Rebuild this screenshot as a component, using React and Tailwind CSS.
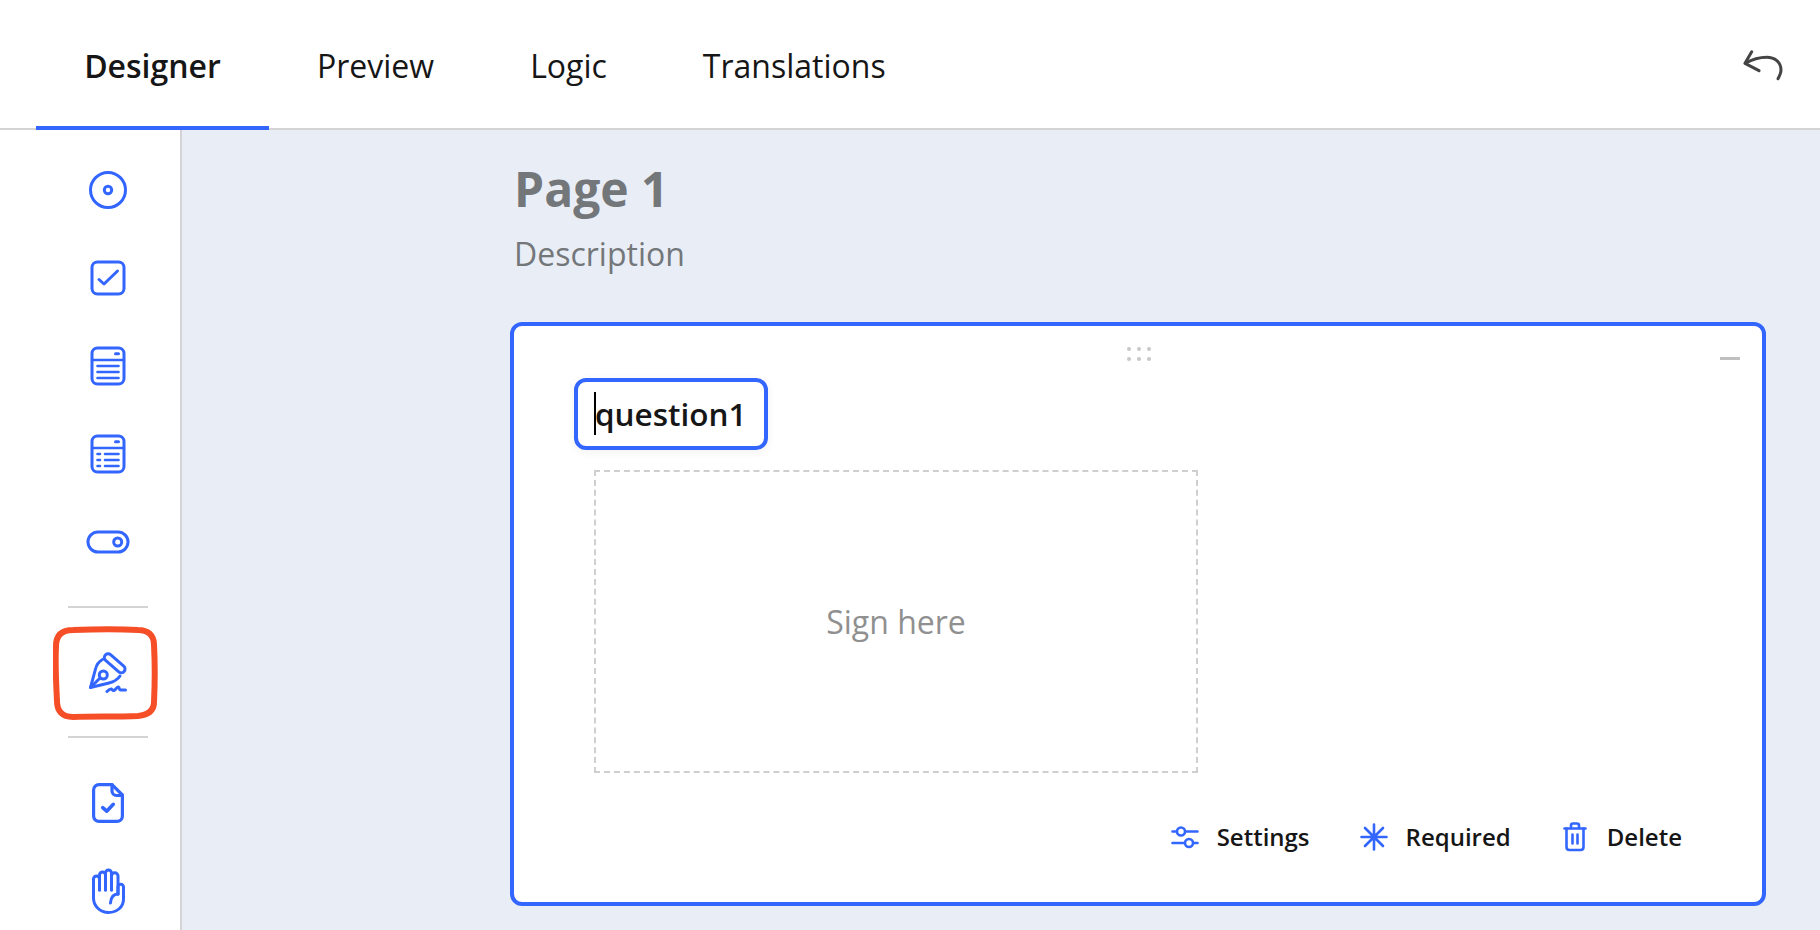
const BLUE = "#3366ff";

function Cell({ children }) {
  return <div className="h-[88px] shrink-0 flex items-center justify-center">{children}</div>;
}

function Radio() {
  return (
    <svg width="40" height="40" viewBox="0 0 40 40" fill="none" stroke={BLUE} strokeWidth="3">
      <circle cx="20" cy="20" r="17.5" />
      <circle cx="20" cy="20" r="3.7" />
    </svg>
  );
}
function Check() {
  return (
    <svg width="36" height="36" viewBox="0 0 36 36" fill="none" stroke={BLUE} strokeWidth="3" strokeLinecap="round" strokeLinejoin="round">
      <rect x="2" y="2" width="32" height="32" rx="5.5" />
      <path d="M9 19.5l5 4.5L27.5 11" />
    </svg>
  );
}
function TableA() {
  return (
    <svg width="36" height="40" viewBox="0 0 36 40" fill="none" stroke={BLUE} strokeWidth="3" strokeLinecap="round">
      <rect x="2" y="2" width="32" height="36" rx="5.5" />
      <path d="M2 14h32" strokeWidth="2.4" />
      <path d="M25.5 7.8h3" />
      <path d="M7.5 20h21M7.5 26h21M7.5 32h21" strokeWidth="2.6" />
    </svg>
  );
}
function TableB() {
  return (
    <svg width="36" height="40" viewBox="0 0 36 40" fill="none" stroke={BLUE} strokeWidth="3" strokeLinecap="round">
      <rect x="2" y="2" width="32" height="36" rx="5.5" />
      <path d="M2 14h32" strokeWidth="2.4" />
      <path d="M25.5 7.8h3" />
      <path d="M7.5 20h2.5M7.5 26h2.5M7.5 32h2.5" strokeWidth="2.6" />
      <path d="M15 20h13.5M15 26h13.5M15 32h13.5" strokeWidth="2.6" />
    </svg>
  );
}
function Toggle() {
  return (
    <svg width="44" height="24" viewBox="0 0 44 24" fill="none" stroke={BLUE} strokeWidth="3">
      <rect x="2" y="2" width="40" height="20" rx="10" />
      <circle cx="31.7" cy="12" r="4" />
    </svg>
  );
}
function Pen() {
  return (
    <svg width="42" height="42" viewBox="0 0 42 42" fill="none" stroke={BLUE} strokeWidth="3" strokeLinecap="round" strokeLinejoin="round">
      <path d="M15.500 8.500C11 11 9.500 14 8.500 18L3.500 36.500 22 32c4-1 8-2.500 11-7" />
      <rect x="15" y="8.500" width="25" height="7.500" rx="3.750" transform="rotate(41 27.5 12.5)" />
      <circle cx="16.300" cy="24" r="4" />
      <path d="M3.500 36.500l9.800-9.800" />
      <path d="M20 40.500c2-2 3-3 4.500-2.500 1 .5 1 2 2.500 1.500 2-.8 3-4 4.500-3.500 1 .5.500 3 2 3h5" />
    </svg>
  );
}
function FileCheck() {
  return (
    <svg width="32" height="40" viewBox="0 0 32 40" fill="none" stroke={BLUE} strokeWidth="3.2" strokeLinecap="round" strokeLinejoin="round">
      <path d="M20 1.600H7A5.400 5.400 0 0 0 1.600 7v26A5.400 5.400 0 0 0 7 38.400h18a5.400 5.400 0 0 0 5.400-5.400V12L20 1.600z" />
      <path d="M20 1.600V8a4.500 4.500 0 0 0 4.500 4.500h5.900" />
      <path d="M10.700 24.700l4 3.500 6.600-6.900" strokeWidth="3.600" />
    </svg>
  );
}
function Hand() {
  return (
    <svg width="35" height="47" viewBox="0 0 35 47" fill="none" stroke={BLUE} strokeWidth="3" strokeLinecap="round" strokeLinejoin="round">
      <path d="M2.500 27V11a3 3 0 0 1 6 0v11" />
      <path d="M8.500 22V7a3 3 0 0 1 6 0v15" />
      <path d="M14.500 22V5a3 3 0 0 1 6 0v17" />
      <path d="M20.500 22V8a3.250 3.250 0 0 1 6.500 0v18" />
      <path d="M27 26v-7a2.750 2.750 0 0 1 5.500 0v12c0 8-6.500 13.500-15 13.500S2.500 38 2.500 30v-3" />
      <path d="M27 26c-4 0-7 3-7.500 9" />
    </svg>
  );
}
function Sliders() {
  return (
    <svg width="28" height="26" viewBox="0 0 28 26" fill="none" stroke={BLUE} strokeWidth="2.6" strokeLinecap="round">
      <path d="M1.500 7.500h3M15.500 7.500h11" />
      <circle cx="10" cy="7.500" r="4" />
      <path d="M1.500 19h11M23.500 19h3" />
      <circle cx="18" cy="19" r="4" />
    </svg>
  );
}
function Star() {
  return (
    <svg width="28" height="28" viewBox="0 0 28 28" fill="none" stroke={BLUE} strokeWidth="2.6" strokeLinecap="round">
      <path d="M14 1.500v25M1.500 14h25M5 5l18 18M23 5L5 23" />
    </svg>
  );
}
function Trash() {
  return (
    <svg width="24" height="30" viewBox="0 0 24 30" fill="none" stroke={BLUE} strokeWidth="2.6" strokeLinecap="round" strokeLinejoin="round">
      <path d="M1.500 6.500h21" />
      <path d="M8 6V3.500C8 2.400 8.800 1.500 10 1.500h4c1.200 0 2 .9 2 2V6" />
      <path d="M3.500 6.500V25c0 1.800 1.200 3 3 3h11c1.800 0 3-1.200 3-3V6.500" />
      <path d="M9.500 12.500v9M14.500 12.500v9" />
    </svg>
  );
}
function Undo() {
  return (
    <svg width="40" height="31" viewBox="0 0 40 31" fill="none" stroke="#444444" strokeWidth="3" strokeLinecap="round" strokeLinejoin="round">
      <path d="M8.700 1.700L2 13.300l14 7.400" />
      <path d="M2.500 13.300C9 9.500 16 7.300 23.700 7.300c8 0 14.300 4.700 14.300 12.700 0 3-1.500 6-3 8.700" />
    </svg>
  );
}

function Action({ icon, label, className }) {
  return (
    <div className={"flex items-center " + className}>
      {icon}
      <span className="text-[24px] leading-[32px] font-semibold text-[#161616]">{label}</span>
    </div>
  );
}

export default function App() {
  return (
    <div className="h-[930px] w-[1820px] overflow-hidden bg-white flex flex-col font-['Open_Sans',sans-serif]">
      <header className="h-[130px] shrink-0 flex items-stretch pl-[36px] border-b-2 border-[#d4d4d4]">
        <div className="w-[233px] h-[130px] pt-[5px] border-b-4 border-[#3366ff] flex items-center justify-center text-[32px] font-semibold text-[#161616]">Designer</div>
        <div className="ml-[48px] pt-[3px] flex items-center text-[32px] text-[#161616]">Preview</div>
        <div className="ml-[96px] pt-[3px] flex items-center text-[32px] text-[#161616]">Logic</div>
        <div className="ml-[96px] pt-[3px] flex items-center text-[32px] text-[#161616]">Translations</div>
        <div className="ml-auto pr-[37px] pt-[50px]"><Undo /></div>
      </header>
      <div className="flex flex-1 min-h-0">
        <aside className="relative w-[182px] shrink-0 border-r-2 border-[#d4d4d4] pt-[16px] pl-[36px] flex flex-col">
          <Cell><Radio /></Cell>
          <Cell><Check /></Cell>
          <Cell><TableA /></Cell>
          <Cell><TableB /></Cell>
          <Cell><Toggle /></Cell>
          <div className="mt-[20px] mx-[32px] h-[2px] bg-[#d4d4d4] shrink-0" />
          <div className="h-[128px] shrink-0 flex items-center justify-center"><Pen /></div>
          <div className="mx-[32px] h-[2px] bg-[#d4d4d4] shrink-0" />
          <div className="mt-[21px] shrink-0" />
          <Cell><FileCheck /></Cell>
          <Cell><Hand /></Cell>
          <svg className="absolute left-[53px] top-[496px]" width="105" height="94" viewBox="0 0 105 94" fill="none" stroke="#f64e27" strokeWidth="6" strokeLinecap="round">
            <path d="M20 4C45 3 68 3 85 4c10 0 16 5 16 15 1 18 1 36 0 57 0 9-6 13-16 14-24 1-44 0-65 1C9 91 4 85 4 75 3 55 2 38 3 20 3 9 9 4 20 4z" />
          </svg>
        </aside>
        <main className="flex-1 min-w-0 bg-[#e9eef6] pl-[328px] pr-[54px] pt-[31px]">
          <h1 className="text-[48px] leading-[56px] font-bold text-[#74777a] pl-[4px]">Page 1</h1>
          <p className="text-[32px] leading-[38px] text-[#74777a] pl-[4px] mt-[18px]">Description</p>
          <section className="relative mt-[49px] h-[584px] border-4 border-[#3366ff] rounded-[12px] bg-white pt-[52px] pl-[60px]">
            <div className="absolute left-[613px] top-[21px] grid grid-cols-3 gap-x-[6px] gap-y-[6px]">
              {[0, 1, 2, 3, 4, 5].map((i) => (
                <span key={i} className="w-[4px] h-[4px] rounded-full bg-[#c8c8c8]" />
              ))}
            </div>
            <div className="absolute right-[22px] top-[31px] w-[20px] h-[3px] bg-[#c0c0c0]" />
            <div className="w-[194px] h-[72px] border-4 border-[#3366ff] rounded-[12px] bg-white shadow-[0_2px_10px_rgba(0,0,0,0.06)] flex items-center pl-[17px] relative">
              <span className="text-[31.5px] leading-[44px] font-semibold text-[#161616]">question1</span>
              <span className="absolute left-[16px] top-[10px] w-[2px] h-[43px] bg-black" />
            </div>
            <div className="ml-[20px] mt-[20px] w-[604px] h-[303px] border-2 border-dashed border-[#cfcfcf] flex items-center justify-center text-[32px] text-[#909090]">Sign here</div>
            <div className="flex items-center absolute right-[80px] top-[495px]">
              <Action icon={<Sliders />} label="Settings" className="gap-[18px]" />
              <Action icon={<Star />} label="Required" className="gap-[18px] ml-[50px]" />
              <Action icon={<Trash />} label="Delete" className="gap-[20px] ml-[52px]" />
            </div>
          </section>
        </main>
      </div>
    </div>
  );
}
